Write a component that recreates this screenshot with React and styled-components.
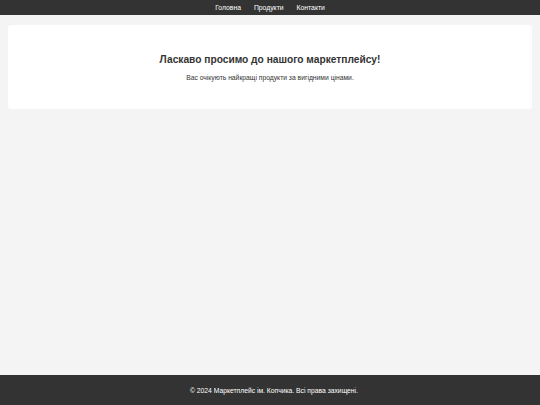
import React from "react";
import styled, { createGlobalStyle } from "styled-components";

const GlobalStyle = createGlobalStyle`
  html, body {
    margin: 0;
    padding: 0;
    height: 100%;
  }
  body {
    background-color: #f4f4f4;
    font-family: "Liberation Sans", Arial, sans-serif;
    color: #333;
  }
  #root {
    min-height: 100%;
  }
`;

const Page = styled.div`
  display: flex;
  flex-direction: column;
  min-height: 100vh;
`;

const Header = styled.header`
  background-color: #333;
  height: 15px;
  display: flex;
  align-items: center;
  justify-content: center;
`;

const Nav = styled.nav`
  display: flex;
`;

const NavLink = styled.a`
  color: #fff;
  text-decoration: none;
  font-size: 6.8px;
  margin: 0 6.5px;
`;

const Main = styled.main`
  flex: 1;
  padding: 10px 8px;
`;

const Hero = styled.section`
  background-color: #fff;
  border-radius: 3px;
  height: 84px;
  display: flex;
  flex-direction: column;
  align-items: center;
  justify-content: center;
  text-align: center;
`;

const Title = styled.h1`
  margin: 0 0 9px;
  font-size: 10.2px;
  font-weight: bold;
  color: #333;
`;

const Lead = styled.p`
  margin: 0;
  font-size: 6.75px;
  color: #333;
`;

const Footer = styled.footer`
  background-color: #333;
  color: #fff;
  height: 30px;
  padding-left: 8px;
  display: flex;
  align-items: center;
  justify-content: center;
  font-size: 6.75px;
`;

function App() {
  return (
    <>
      <GlobalStyle />
      <Page>
        <Header>
          <Nav>
            <NavLink href="#">Головна</NavLink>
            <NavLink href="#">Продукти</NavLink>
            <NavLink href="#">Контакти</NavLink>
          </Nav>
        </Header>
        <Main>
          <Hero>
            <Title>Ласкаво просимо до нашого маркетплейсу!</Title>
            <Lead>Вас очікують найкращі продукти за вигідними цінами.</Lead>
          </Hero>
        </Main>
        <Footer>© 2024 Маркетплейс ім. Копчика. Всі права захищені.</Footer>
      </Page>
    </>
  );
}

export default App;
